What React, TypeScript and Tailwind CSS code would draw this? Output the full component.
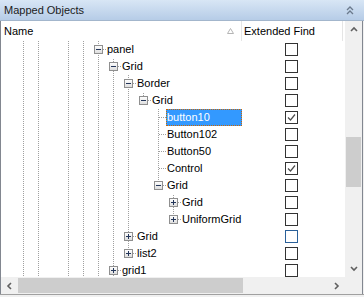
import React from "react";

type Row = {
  depth: number;
  lines: number[];
  hasNext: boolean;
  expander?: "minus" | "plus";
  name: string;
  checked?: boolean;
  selected?: boolean;
  hover?: boolean;
};

const base = [0, 1, 3, 4];

const rows: Row[] = [
  { depth: 5, lines: base, hasNext: true, expander: "minus", name: "panel" },
  { depth: 6, lines: [...base, 5], hasNext: true, expander: "minus", name: "Grid" },
  { depth: 7, lines: [...base, 5, 6], hasNext: true, expander: "minus", name: "Border" },
  { depth: 8, lines: [...base, 5, 6, 7], hasNext: false, expander: "minus", name: "Grid" },
  { depth: 9, lines: [...base, 5, 6, 7], hasNext: true, name: "button10", checked: true, selected: true },
  { depth: 9, lines: [...base, 5, 6, 7], hasNext: true, name: "Button102" },
  { depth: 9, lines: [...base, 5, 6, 7], hasNext: true, name: "Button50" },
  { depth: 9, lines: [...base, 5, 6, 7], hasNext: true, name: "Control", checked: true },
  { depth: 9, lines: [...base, 5, 6, 7], hasNext: false, expander: "minus", name: "Grid" },
  { depth: 10, lines: [...base, 5, 6, 7], hasNext: true, expander: "plus", name: "Grid" },
  { depth: 10, lines: [...base, 5, 6, 7], hasNext: false, expander: "plus", name: "UniformGrid" },
  { depth: 7, lines: [...base, 5, 6], hasNext: true, expander: "plus", name: "Grid", hover: true },
  { depth: 7, lines: [...base, 5, 6], hasNext: false, expander: "plus", name: "list2" },
  { depth: 6, lines: [...base, 5], hasNext: true, expander: "plus", name: "grid1" },
];

const DOT = "#a0a0a0";

const TreeCell = ({
  kind,
  hasNext,
  expander,
  odd,
}: {
  kind: "empty" | "line" | "own";
  hasNext?: boolean;
  expander?: "minus" | "plus";
  odd: boolean;
}) => {
  const off = odd ? 1 : 0;
  return (
    <svg width="15" height="17" className="block shrink-0">
      {kind === "line" && (
        <line x1="7.5" y1="0" x2="7.5" y2="17" stroke={DOT} strokeDasharray="1 1" strokeDashoffset={off} />
      )}
      {kind === "own" && (
        <>
          <line x1="7.5" y1="0" x2="7.5" y2={hasNext ? 17 : 8} stroke={DOT} strokeDasharray="1 1" strokeDashoffset={off} />
          <line x1="8" y1="8.5" x2="15" y2="8.5" stroke={DOT} strokeDasharray="1 1" />
          {expander && (
            <>
              <defs>
                <linearGradient id="exp" x1="0" y1="0" x2="0" y2="1">
                  <stop offset="0" stopColor="#ffffff" />
                  <stop offset="1" stopColor="#dcdcdc" />
                </linearGradient>
              </defs>
              <rect x="3.5" y="4.5" width="8" height="8" fill="url(#exp)" stroke="#8f8f8f" />
              <line x1="5" y1="8.5" x2="10" y2="8.5" stroke="#24365a" />
              {expander === "plus" && <line x1="7.5" y1="6" x2="7.5" y2="11" stroke="#24365a" />}
            </>
          )}
        </>
      )}
    </svg>
  );
};

const Checkbox = ({ checked, hover }: { checked?: boolean; hover?: boolean }) => (
  <div
    className={`w-[13px] h-[13px] bg-white border ${hover ? "border-[#2a6099]" : "border-[#333333]"}`}
  >
    {checked && (
      <svg width="11" height="11" className="block">
        <path d="M2 5.5 L4.5 8 L9 2.5" fill="none" stroke="#4d4d4d" strokeWidth="1.2" />
      </svg>
    )}
  </div>
);

const Chevron = ({ dir }: { dir: "up" | "down" | "left" | "right" }) => {
  const d = {
    up: "M1 5 L4 2 L7 5",
    down: "M1 2 L4 5 L7 2",
    left: "M5 1 L2 4 L5 7",
    right: "M2 1 L5 4 L2 7",
  }[dir];
  return (
    <svg width="8" height="8" className="block">
      <path d={d} fill="none" stroke="#606060" strokeWidth="1.6" />
    </svg>
  );
};

const App = () => {
  return (
    <div className="w-[364px] h-[297px] bg-white flex flex-col overflow-hidden font-['Liberation_Sans',Arial,sans-serif] text-[11px] text-black">
      <div className="h-[21px] shrink-0 flex items-center justify-between pl-[4px] pr-[10px] bg-linear-to-b from-[#d8e6f5] to-[#b6cce7] border-b border-[#a3b6cc]">
        <span className="text-[#1b1b1b] pt-[1px]">Mapped Objects</span>
        <svg width="8" height="10" className="block">
          <path d="M1 5 L4 2 L7 5 M1 9 L4 6 L7 9" fill="none" stroke="#6b7a8c" strokeWidth="1.3" />
        </svg>
      </div>

      <div className="flex h-[273px] shrink-0 border-l border-[#828790]">
        <div className="w-[344px] flex flex-col">
          <div className="h-[20px] flex shrink-0">
            <div className="w-[241px] flex items-center justify-between pl-[3px] pr-[7px] border-r border-[#e5e5e5]">
              <span>Name</span>
              <svg width="7" height="6" className="block">
                <path d="M0.5 5.5 L3.5 0.5 L6.5 5.5 Z" fill="none" stroke="#b5b5b5" />
              </svg>
            </div>
            <div className="w-[101px] flex items-center pl-[2px] border-r border-[#e5e5e5]">
              <span>Extended Find</span>
            </div>
          </div>

          <div className="h-[236px] overflow-hidden">
            {rows.map((row, i) => (
              <div key={i} className="h-[17px] flex">
                <div className="w-[241px] flex pl-[15px]">
                  {Array.from({ length: row.depth }).map((_, k) => (
                    <TreeCell key={k} kind={row.lines.includes(k) ? "line" : "empty"} odd={i % 2 === 1} />
                  ))}
                  <TreeCell kind="own" hasNext={row.hasNext} expander={row.expander} odd={i % 2 === 1} />
                  {row.selected ? (
                    <div className="flex-1 bg-[#3399ff] text-white border border-dotted border-[#cc6600] leading-[15px] whitespace-nowrap">
                      {row.name}
                    </div>
                  ) : (
                    <div className="pl-[1px] leading-[17px] whitespace-nowrap">{row.name}</div>
                  )}
                </div>
                <div className="flex-1 pl-[43px] pt-[2px]">
                  <Checkbox checked={row.checked} hover={row.hover} />
                </div>
              </div>
            ))}
          </div>

          <div className="h-[17px] shrink-0 flex bg-[#f0f0f0]">
            <div className="w-[17px] flex items-center justify-center">
              <Chevron dir="left" />
            </div>
            <div className="flex-1 flex">
              <div className="w-[225px] my-[1px] bg-[#cdcdcd]" />
            </div>
            <div className="w-[17px] flex items-center justify-center">
              <Chevron dir="right" />
            </div>
          </div>
        </div>

        <div className="w-[17px] flex flex-col bg-[#f0f0f0]">
          <div className="h-[17px] flex items-center justify-center">
            <Chevron dir="up" />
          </div>
          <div className="flex-1">
            <div className="mt-[99px] mx-[1px] h-[50px] bg-[#cdcdcd]" />
          </div>
          <div className="h-[17px] flex items-center justify-center">
            <Chevron dir="down" />
          </div>
          <div className="h-[17px] bg-[#f0f0f0]" />
        </div>

        <div className="w-[2px] border-l border-[#828790] bg-[#f0f0f0]" />
      </div>

      <div className="flex-1 border-t border-[#a0a0a0] bg-[#f0f0f0]" />
    </div>
  );
};

export default App;
